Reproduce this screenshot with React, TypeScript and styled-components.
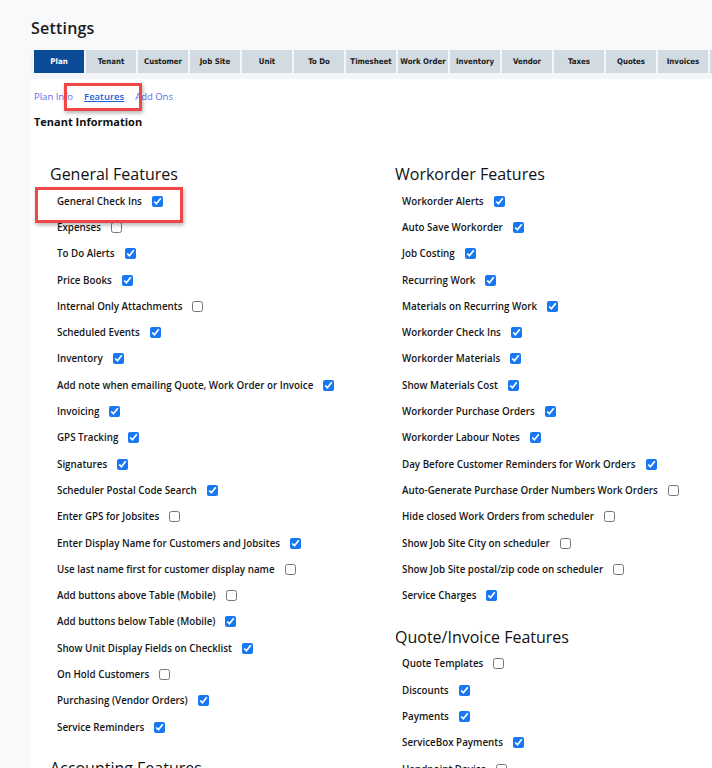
import * as React from 'react';
import styled, { createGlobalStyle } from 'styled-components';

const GlobalStyle = createGlobalStyle`
  html, body {
    margin: 0;
    padding: 0;
    background: #f8f9fb;
    overflow: hidden;
  }
  body {
    font-family: "Open Sans", "Liberation Sans", sans-serif;
    color: #111;
  }
`;

const Page = styled.div`
  padding-left: 31px;
  width: 760px;
`;

const Title = styled.h1`
  margin: 0;
  padding-top: 17px;
  height: 33px;
  font-size: 16px;
  font-weight: 600;
  letter-spacing: 0.2px;
  color: #1b1b1b;
`;

const TabBar = styled.div`
  display: flex;
  gap: 2px;
  padding: 0 0 6px 3px;
  background: #f3f5f8;
`;

const Tab = styled.div<{ $active?: boolean }>`
  flex: 0 0 50px;
  height: 23px;
  display: flex;
  align-items: center;
  justify-content: center;
  font-family: "DejaVu Sans Condensed", "DejaVu Sans", Verdana, sans-serif;
  font-size: 7.8px;
  font-weight: 700;
  white-space: nowrap;
  overflow: hidden;
  background: ${(p) => (p.$active ? '#0b4a96' : '#d3dbe2')};
  color: ${(p) => (p.$active ? '#ffffff' : '#1a1a1a')};
`;

const Panel = styled.div`
  background: #ffffff;
  padding: 10px 0 40px 3px;
  min-height: 700px;
`;

const SubNav = styled.div`
  display: flex;
  gap: 11px;
  height: 14px;
  align-items: center;
  font-size: 9.5px;
`;

const SubLink = styled.span<{ $active?: boolean }>`
  color: ${(p) => (p.$active ? '#1f5fd6' : '#5a6df2')};
  font-weight: ${(p) => (p.$active ? 600 : 400)};
  text-decoration: ${(p) => (p.$active ? 'underline' : 'none')};
`;

const Highlight = styled.span<{ $t: number; $r: number; $b: number; $l: number }>`
  position: relative;
  display: inline-flex;
  align-items: center;
  &::after {
    content: '';
    position: absolute;
    top: ${(p) => -p.$t}px;
    right: ${(p) => -p.$r}px;
    bottom: ${(p) => -p.$b}px;
    left: ${(p) => -p.$l}px;
    border: 3px solid #ef4747;
    box-shadow: 1px 2px 4px rgba(0, 0, 0, 0.3);
    pointer-events: none;
  }
`;

const SectionTitle = styled.div`
  margin-top: 12px;
  font-size: 11px;
  font-weight: 700;
  height: 14px;
  line-height: 14px;
`;

const Columns = styled.div`
  display: grid;
  grid-template-columns: 345px 345px;
  padding-left: 16px;
  margin-top: 35px;
`;

const Column = styled.div`
  display: flex;
  flex-direction: column;
`;

const GroupTitle = styled.h2<{ $first?: boolean }>`
  margin: ${(p) => (p.$first ? '0' : '18px')} 0 4px 0;
  font-size: 16px;
  font-weight: 500;
  height: 20px;
  line-height: 20px;
  color: #111;
`;

const Row = styled.div`
  height: 26.3px;
  display: flex;
  align-items: center;
  padding-left: 7px;
`;

const Label = styled.label`
  font-size: 9.8px;
  font-weight: 600;
  color: #161616;
  display: inline-flex;
  align-items: center;
  gap: 10px;
`;

const Check = styled.input`
  width: 11px;
  height: 11px;
  margin: 0;
  accent-color: #1877f2;
`;

type Item = [string, boolean];

const general: Item[] = [
  ['General Check Ins', true],
  ['Expenses', false],
  ['To Do Alerts', true],
  ['Price Books', true],
  ['Internal Only Attachments', false],
  ['Scheduled Events', true],
  ['Inventory', true],
  ['Add note when emailing Quote, Work Order or Invoice', true],
  ['Invoicing', true],
  ['GPS Tracking', true],
  ['Signatures', true],
  ['Scheduler Postal Code Search', true],
  ['Enter GPS for Jobsites', false],
  ['Enter Display Name for Customers and Jobsites', true],
  ['Use last name first for customer display name', false],
  ['Add buttons above Table (Mobile)', false],
  ['Add buttons below Table (Mobile)', true],
  ['Show Unit Display Fields on Checklist', true],
  ['On Hold Customers', false],
  ['Purchasing (Vendor Orders)', true],
  ['Service Reminders', true],
];

const workorder: Item[] = [
  ['Workorder Alerts', true],
  ['Auto Save Workorder', true],
  ['Job Costing', true],
  ['Recurring Work', true],
  ['Materials on Recurring Work', true],
  ['Workorder Check Ins', true],
  ['Workorder Materials', true],
  ['Show Materials Cost', true],
  ['Workorder Purchase Orders', true],
  ['Workorder Labour Notes', true],
  ['Day Before Customer Reminders for Work Orders', true],
  ['Auto-Generate Purchase Order Numbers Work Orders', false],
  ['Hide closed Work Orders from scheduler', false],
  ['Show Job Site City on scheduler', false],
  ['Show Job Site postal/zip code on scheduler', false],
  ['Service Charges', true],
];

const quote: Item[] = [
  ['Quote Templates', false],
  ['Discounts', true],
  ['Payments', true],
  ['ServiceBox Payments', true],
  ['Handpoint Device', false],
];

const tabs = ['Plan', 'Tenant', 'Customer', 'Job Site', 'Unit', 'To Do', 'Timesheet', 'Work Order', 'Inventory', 'Vendor', 'Taxes', 'Quotes', 'Invoices', 'Settings'];

const Feature = ({ item, mark }: { item: Item; mark?: boolean }) => {
  const label = (
    <Label>
      {item[0]}
      <Check type="checkbox" defaultChecked={item[1]} />
    </Label>
  );
  return (
    <Row>
      {mark ? (
        <Highlight $t={8} $r={20} $b={15} $l={22}>
          {label}
        </Highlight>
      ) : (
        label
      )}
    </Row>
  );
};

const App: React.FunctionComponent = () => {
  return (
    <Page>
      <GlobalStyle />
      <Title>Settings</Title>
      <TabBar>
        {tabs.map((t, i) => (
          <Tab key={t} $active={i === 0}>
            {t}
          </Tab>
        ))}
      </TabBar>
      <Panel>
        <SubNav>
          <SubLink>Plan Info</SubLink>
          <Highlight $t={7} $r={18} $b={8} $l={20}>
            <SubLink $active>Features</SubLink>
          </Highlight>
          <SubLink>Add Ons</SubLink>
        </SubNav>
        <SectionTitle>Tenant Information</SectionTitle>
        <Columns>
          <Column>
            <GroupTitle $first>General Features</GroupTitle>
            {general.map((it, i) => (
              <Feature key={it[0]} item={it} mark={i === 0} />
            ))}
            <GroupTitle>Accounting Features</GroupTitle>
          </Column>
          <Column>
            <GroupTitle $first>Workorder Features</GroupTitle>
            {workorder.map((it) => (
              <Feature key={it[0]} item={it} />
            ))}
            <GroupTitle>Quote/Invoice Features</GroupTitle>
            {quote.map((it) => (
              <Feature key={it[0]} item={it} />
            ))}
          </Column>
        </Columns>
      </Panel>
    </Page>
  );
};

export default App;
